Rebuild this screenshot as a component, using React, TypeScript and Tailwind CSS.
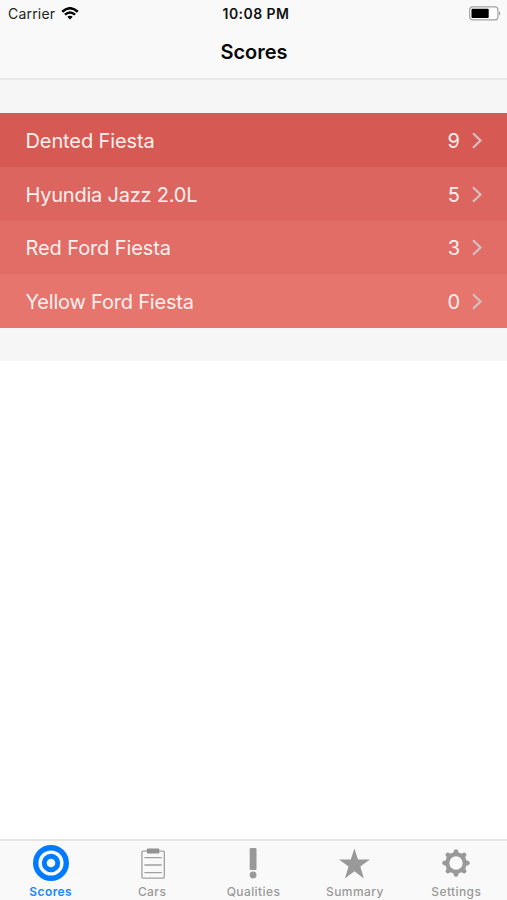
import React from "react";
import { clsx } from "clsx";

const scores = [
  { name: "Dented Fiesta", score: 9, row: "bg-[#d65a53]", text: "tracking-[-0.1px]" },
  { name: "Hyundia Jazz 2.0L", score: 5, row: "bg-[#dd655f]", text: "tracking-[-0.22px]" },
  { name: "Red Ford Fiesta", score: 3, row: "bg-[#e26c66]", text: "tracking-[-0.1px]" },
  { name: "Yellow Ford Fiesta", score: 0, row: "bg-[#e6756e]", text: "tracking-[-0.2px]" },
];

const TargetIcon = () => (
  <svg viewBox="0 0 36 36" className="h-9 w-9">
    <circle cx="18" cy="18" r="18" fill="#007aff" />
    <circle cx="18" cy="18" r="10.9" fill="none" stroke="#f8fbff" strokeWidth="3.4" />
    <circle cx="18" cy="18" r="4.3" fill="#f8fbff" />
  </svg>
);

const ClipboardIcon = () => (
  <svg viewBox="0 0 36 36" className="ml-px h-9 w-9" fill="none" stroke="#a0a0a0">
    <rect x="6.9" y="6.1" width="22.4" height="27" rx="1.2" strokeWidth="1.3" />
    <rect x="11.9" y="3.4" width="12.4" height="5" rx="0.6" fill="#929292" stroke="none" />
    <path d="M9.4 12.6h17.4M9.4 20h17.4M9.4 27.6h17.4" strokeWidth="1.3" />
  </svg>
);

const ExclamationIcon = () => (
  <svg viewBox="0 0 36 36" className="h-9 w-9" fill="#999999">
    <rect x="14.7" y="3" width="6.8" height="22" rx="1" />
    <circle cx="18.1" cy="30" r="3.4" />
  </svg>
);

const StarIcon = () => (
  <svg viewBox="0 0 36 36" className="h-9 w-9" fill="#999999">
    <path d="M17.4 3.4l3.6 11.2h11.9l-9.6 6.9 3.6 11.9-9.5-7.2-9.5 7.2 3.6-11.9-9.6-6.9h11.9z" />
  </svg>
);

const GearIcon = () => (
  <svg viewBox="0 0 36 36" className="h-9 w-9" stroke="#999999" fill="none">
    <circle cx="18" cy="18" r="8.7" strokeWidth="4" />
    {[0, 45, 90, 135, 180, 225, 270, 315].map((deg) => (
      <path
        key={deg}
        d="M14.4 8.8Q16 7.8 16.1 5.8Q16.3 4.4 18 4.4T19.9 5.8Q20 7.8 21.6 8.8Z"
        transform={`rotate(${deg} 18 18)`}
        fill="#999999"
        strokeWidth="0.4"
      />
    ))}
  </svg>
);

const tabs = [
  { label: "Scores", icon: <TargetIcon />, active: true },
  { label: "Cars", icon: <ClipboardIcon /> },
  { label: "Qualities", icon: <ExclamationIcon /> },
  { label: "Summary", icon: <StarIcon /> },
  { label: "Settings", icon: <GearIcon /> },
];

const WifiIcon = () => (
  <svg viewBox="0 0 18 13" className="ml-[6px] h-[13px] w-[18px]" fill="none" stroke="#000">
    <path d="M1.2 4.7Q9-2.2 16.8 4.7" strokeWidth="2.5" />
    <path d="M3.9 7.7Q9 3.2 14.1 7.7" strokeWidth="2.3" />
    <path d="M9 12.4L6.3 9.8Q9 7.7 11.7 9.8Z" fill="#000" stroke="none" />
  </svg>
);

const BatteryIcon = () => (
  <svg viewBox="0 0 32 15" className="h-[15px] w-8" fill="none">
    <rect x="0.7" y="0.9" width="28.2" height="13" rx="3" fill="#fff" stroke="#a3a3a3" strokeWidth="1.2" />
    <rect x="2.5" y="2.8" width="17.2" height="9.2" rx="1" fill="#000" />
    <path d="M30.2 5.3c1.4.7 1.4 3.5 0 4.2z" fill="#8b8b8b" />
  </svg>
);

const StatusBar = () => (
  <div className="grid h-[27px] grid-cols-3 items-center text-[14px] text-[#222]">
    <div className="flex items-center pl-2">
      <span className="tracking-[0.2px]">Carrier</span>
      <WifiIcon />
    </div>
    <div className="pl-[5px] text-center font-semibold tracking-[0.45px] whitespace-nowrap text-[#111]">10:08 PM</div>
    <div className="flex justify-end pr-[6px] pb-px">
      <BatteryIcon />
    </div>
  </div>
);

export default function App() {
  return (
    <div className="flex h-[900px] w-[507px] flex-col overflow-hidden bg-white font-['Inter','Liberation_Sans',sans-serif]">
      <header className="h-[80px] shrink-0 border-b-2 border-[#e8e8e8] bg-[#f9f9f9]">
        <StatusBar />
        <h1 className="pt-[10px] pl-px text-center text-[20px] leading-[30px] font-semibold text-[#080808]">
          Scores
        </h1>
      </header>
      <main className="flex-1">
        <div className="bg-[#f6f6f6] pt-[33px] pb-[33px]">
          {scores.map((item) => (
            <div
              key={item.name}
              className={clsx("flex h-[53.75px] items-center pr-[24px] pl-[25.5px] text-[20px] text-[#fff0ee]", item.row)}
            >
              <span className={clsx("flex-1 pt-[2px]", item.text)}>{item.name}</span>
              <span className="pt-[2px]">{item.score}</span>
              <svg viewBox="0 0 12 18" className="ml-[11px] h-[18px] w-3" fill="none">
                <path d="M2 2.2L9.5 9.5 2 16.8" stroke="#d5bfc2" strokeWidth="2.2" />
              </svg>
            </div>
          ))}
        </div>
      </main>
      <nav className="grid h-[61px] shrink-0 grid-cols-5 border-t-2 border-[#e5e5e5] bg-[#f9f9f9]">
        {tabs.map((tab) => (
          <div key={tab.label} className="flex flex-col items-center pt-[4px]">
            {tab.icon}
            <span
              className={clsx(
                "mt-[4px] text-[12px] leading-[14px] tracking-[0.4px]",
                tab.active ? "font-semibold text-[#1b87fc]" : "font-medium text-[#999]",
              )}
            >
              {tab.label}
            </span>
          </div>
        ))}
      </nav>
    </div>
  );
}
